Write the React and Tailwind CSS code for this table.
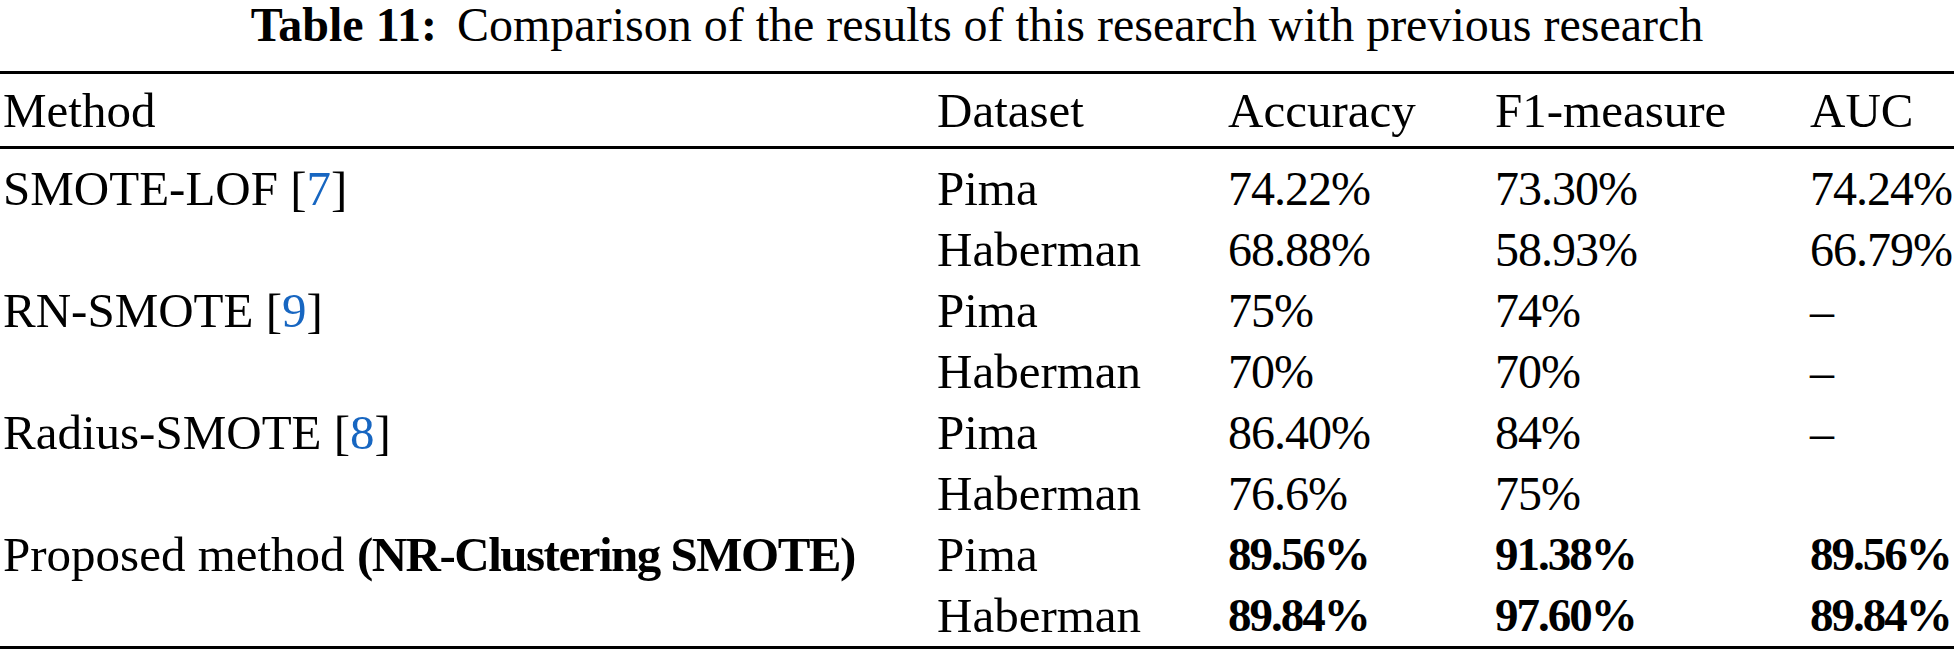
import React from 'react';

const rows = [
  { method: 'SMOTE-LOF ', ref: '7', dataset: 'Pima', acc: '74.22%', f1: '73.30%', auc: '74.24%' },
  { dataset: 'Haberman', acc: '68.88%', f1: '58.93%', auc: '66.79%' },
  { method: 'RN-SMOTE ', ref: '9', dataset: 'Pima', acc: '75%', f1: '74%', auc: '–' },
  { dataset: 'Haberman', acc: '70%', f1: '70%', auc: '–' },
  { method: 'Radius-SMOTE ', ref: '8', dataset: 'Pima', acc: '86.40%', f1: '84%', auc: '–' },
  { dataset: 'Haberman', acc: '76.6%', f1: '75%', auc: '' },
  { proposed: true, dataset: 'Pima', acc: '89.56%', f1: '91.38%', auc: '89.56%', bold: true },
  { dataset: 'Haberman', acc: '89.84%', f1: '97.60%', auc: '89.84%', bold: true },
];

const cols = 'grid grid-cols-[934px_291px_267px_315px_1fr] pl-[3px]';

function MethodCell({ row }) {
  if (row.proposed) {
    return (
      <div>
        Proposed method <span className="font-bold tracking-[-1.5px]">(NR-Clustering SMOTE)</span>
      </div>
    );
  }
  if (!row.method) return <div />;
  return (
    <div>
      {row.method}[<span className="text-[#1766c1]">{row.ref}</span>]
    </div>
  );
}

function Num({ bold, children }) {
  // bold figures in the source are noticeably narrower than Liberation's
  const cls = bold ? 'font-bold text-[47px] tracking-[-2px]' : 'text-[48px] tracking-[-1px]';
  return <div className={cls}>{children}</div>;
}

export default function App() {
  return (
    <div className="w-full bg-white text-black text-[49px] font-['Liberation_Serif','Times_New_Roman',Times,serif]">
      <div className="text-center text-[48px] leading-[50px] mb-[21px]">
        <span className="font-bold">Table 11:</span>
        <span className="ml-[20px]">Comparison of the results of this research with previous research</span>
      </div>

      <div className="border-t-[3px] border-black" />

      <div className={`${cols} leading-[60px] pt-[7px] pb-[5px]`}>
        <div>Method</div>
        <div>Dataset</div>
        <div>Accuracy</div>
        <div>F1-measure</div>
        <div>AUC</div>
      </div>

      <div className="border-t-[3px] border-black" />

      <div className="pt-[9px]">
        {rows.map((row, i) => (
          <div key={i} className={`${cols} leading-[61px]`}>
            <MethodCell row={row} />
            <div>{row.dataset}</div>
            <Num bold={row.bold}>{row.acc}</Num>
            <Num bold={row.bold}>{row.f1}</Num>
            <Num bold={row.bold}>{row.auc}</Num>
          </div>
        ))}
      </div>

      <div className="border-t-[3px] border-black" />
    </div>
  );
}
